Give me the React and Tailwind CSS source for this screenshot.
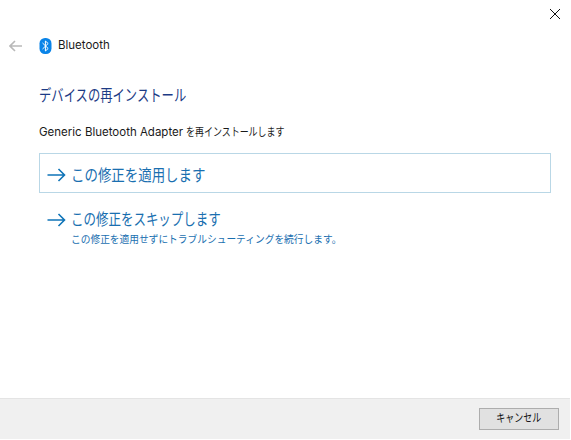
import React from 'react';

const FONT = "font-['Inter','Noto_Sans_CJK_JP',sans-serif]";

const ArrowIcon = () => (
    <svg width="19" height="14" viewBox="0 0 19 14" fill="none" stroke="#0f74b8" strokeWidth="1.6" className="shrink-0">
        <path d="M0.5 7H17.5M11.5 1L17.5 7L11.5 13" />
    </svg>
);

const BluetoothIcon = () => (
    <svg width="13" height="16" viewBox="0 0 13 16" className="shrink-0">
        <rect x="0.5" y="0" width="12" height="16" rx="5.5" fill="#0a84e8" />
        <path d="M3.5 5L9.2 10.5L6.4 13V3L9.2 5.5L3.5 11" fill="none" stroke="#fff" strokeWidth="1" />
    </svg>
);

const App = () => {
    return (
        <div className={`${FONT} w-[571px] h-[440px] bg-white flex flex-col overflow-hidden`}>
            <div className="flex-1 flex flex-col">
                <div className="flex justify-end pt-[9px] pr-[11px]">
                    <svg width="10" height="10" viewBox="0 0 10 10" stroke="#111" strokeWidth="1" fill="none">
                        <path d="M0 0L10 10M10 0L0 10" />
                    </svg>
                </div>

                <div className="flex items-center mt-[18px] pl-[9px] h-[17px]">
                    <svg width="13" height="12" viewBox="0 0 13 12" fill="none" stroke="#b9b9b9" strokeWidth="1.6">
                        <path d="M13 6H1M6 1L1 6L6 11" />
                    </svg>
                    <div className="ml-[17px]"><BluetoothIcon /></div>
                    <span className="ml-[6px] text-[11.5px] text-[#1a1a1a]">Bluetooth</span>
                </div>

                <h1 className="mt-[31px] ml-[39px] text-[16px] leading-[20px] font-normal text-[#1c3b85] origin-left scale-x-[0.77]">デバイスの再インストール</h1>

                <p className="mt-[19px] ml-[39px] text-[11.5px] leading-[16px] text-[#1a1a1a]">
                    Generic Bluetooth Adapter <span className="inline-block origin-left scale-x-[0.78]">を再インストールします</span>
                </p>

                <div className="mt-[13px] ml-[39px] mr-[20px] h-[40px] border border-[#b9d7e6] flex items-center pl-[7px] pt-[3px]">
                    <ArrowIcon />
                    <span className="ml-[5px] text-[16px] text-[#1a6fb0] inline-block origin-left scale-x-[0.84]">この修正を適用します</span>
                </div>

                <div className="mt-[17px] ml-[47px] flex items-start">
                    <div className="mt-[3px]"><ArrowIcon /></div>
                    <div className="ml-[5px] text-[#1a6fb0]">
                        <div className="text-[16px] leading-[19px] origin-left scale-x-[0.78]">この修正をスキップします</div>
                        <div className="mt-[4px] text-[10.5px] leading-[13px] origin-left scale-x-[0.925]">この修正を適用せずにトラブルシューティングを続行します。</div>
                    </div>
                </div>
            </div>

            <div className="h-[41px] mr-[1px] mb-[1px] bg-[#f0f0f0] border-t border-[#e4e4e4] flex items-start justify-end pt-[9px] pr-[11px]">
                <button className="w-[80px] h-[22px] bg-[#e1e1e1] border border-[#adadad] text-[11.5px] text-[#111]">
                    <span className="inline-block scale-x-[0.78]">キャンセル</span>
                </button>
            </div>
        </div>
    );
};

export default App;
